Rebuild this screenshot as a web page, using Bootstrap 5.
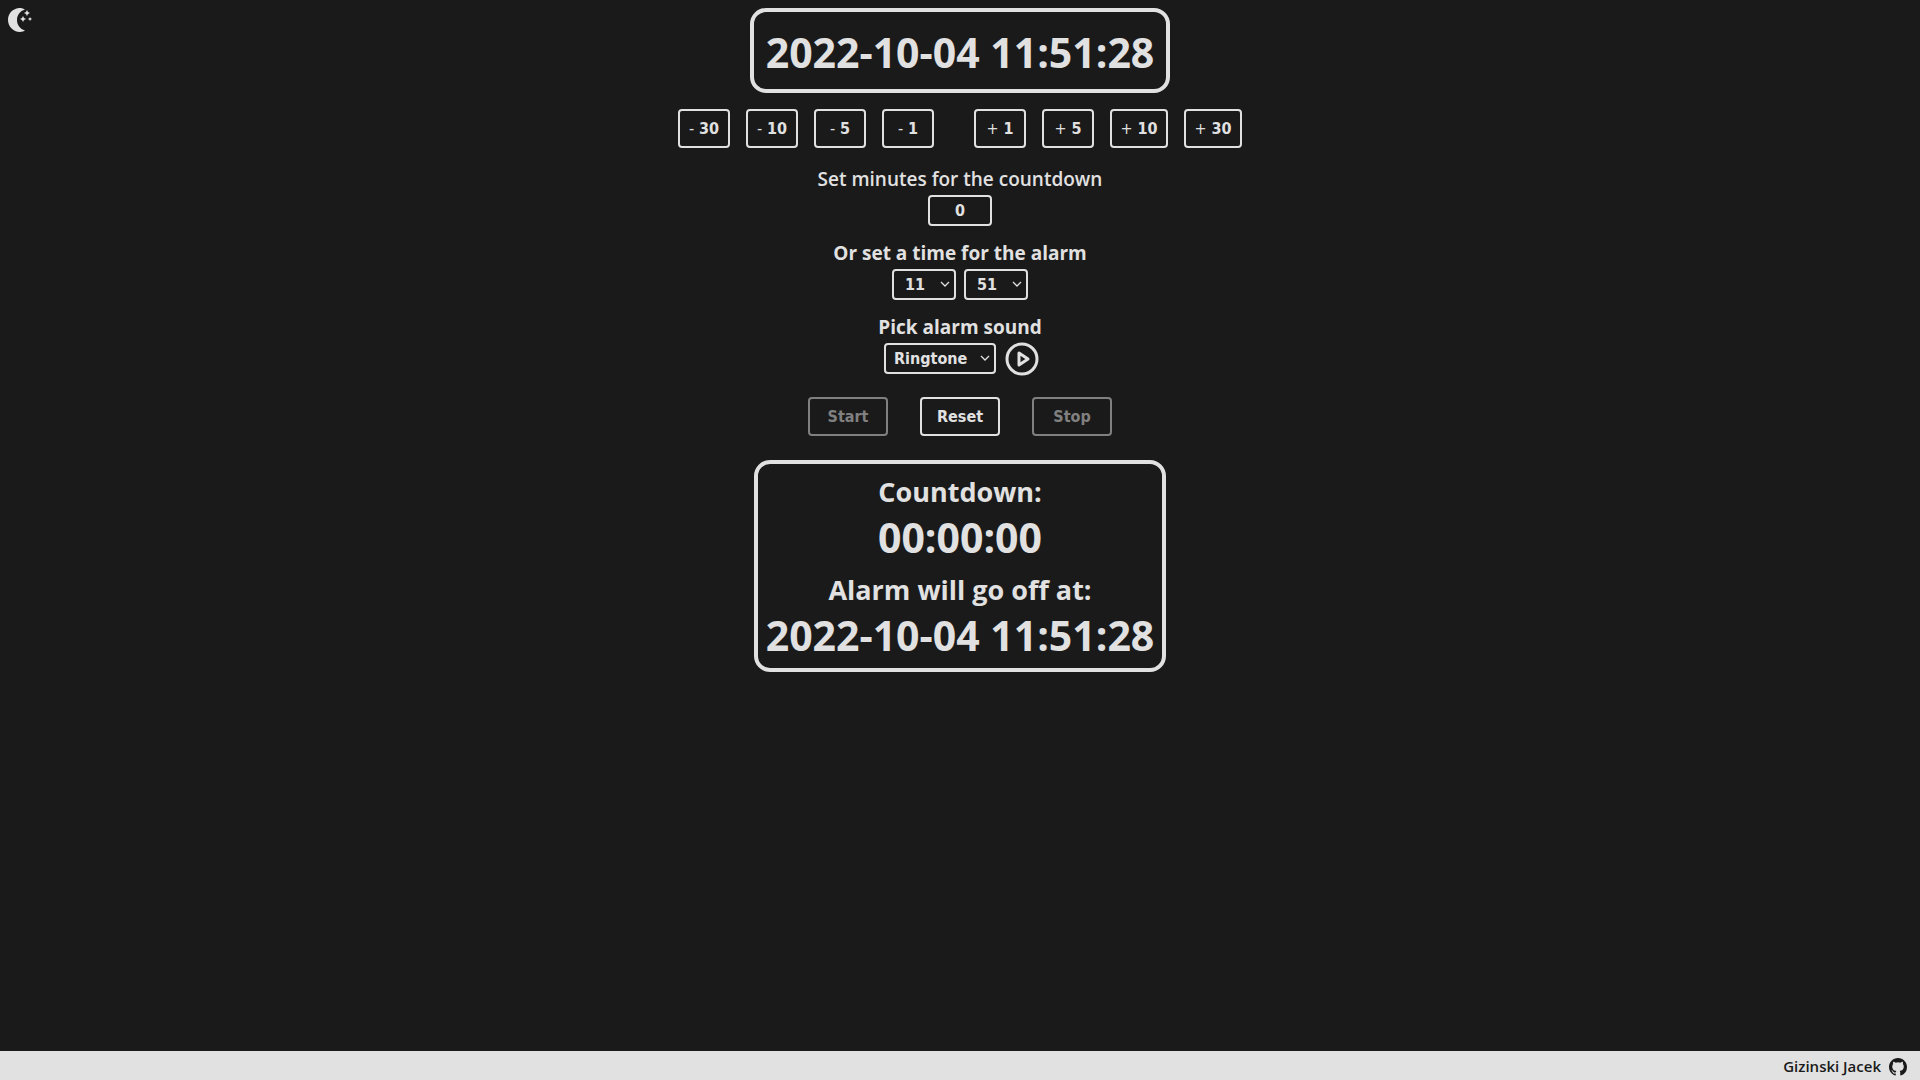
<!DOCTYPE html>
<html lang="en">
<head>
<meta charset="utf-8">
<meta name="viewport" content="width=device-width, initial-scale=1">
<title>Alarm clock</title>
<link rel="stylesheet" href="https://cdn.jsdelivr.net/npm/bootstrap@5.3.0/dist/css/bootstrap.min.css">
<style>
:root { --ink: #e1e1e1; --paper: #1a1a1a; }
body { background: var(--paper); color: var(--ink); font-family: "Segoe UI", "Open Sans", "Noto Sans", sans-serif; font-weight: 600; }
.panel { border: 4px solid var(--ink); border-radius: 16px; text-align: center; font-weight: 700; }
.clock-panel { padding: 22px 12px 19px; }
.alarm-panel { padding: 8px; margin-top: 24px; }
.clock-text { font-size: 41px; line-height: 36px; font-weight: 700; }
.alarm-panel .clock-text { line-height: 50px; }
.panel-title { font-size: 27px; line-height: 40px; font-weight: 700; margin: 0; }
.control { background: transparent; color: var(--ink); border: 2px solid var(--ink); border-radius: 4px; font-family: Tahoma, "DejaVu Sans Condensed", "DejaVu Sans", sans-serif; font-stretch: condensed; font-size: 16px; font-weight: 700; }
.step { height: 39px; min-width: 52px; padding: 0 7px; }
.step-wide { min-width: 58px; }
.step-sign { font-weight: 400; }
.action { height: 39px; width: 80px; padding: 0; }
.action:disabled { color: #808080; border-color: #808080; }
.actions { gap: 32px; margin-top: 20px; }
.field { height: 31px; padding: 0 8px; }
.digits { width: 64px; }
.sound { width: 112px; }
select.control { appearance: none; background: url("data:image/svg+xml,%3Csvg xmlns='http://www.w3.org/2000/svg' width='10' height='7'%3E%3Cpath d='M1 1 5 5 9 1' fill='none' stroke='%23e1e1e1' stroke-width='1.300'/%3E%3C/svg%3E") no-repeat right 4px center; }
select.digits { padding-left: 11px; }
.caption { font-size: 19px; line-height: 31px; }
.strong-caption { font-weight: 700; }
.setting { margin-top: 12px; }
.credit { background: var(--ink); height: 29px; font-size: 15px; padding: 2px 13px 0 0; }
.credit a { color: var(--paper); }
.theme { left: 8px; top: 8px; }
</style>
<script src="https://cdn.jsdelivr.net/npm/bootstrap@5.3.0/dist/js/bootstrap.bundle.min.js"></script>
</head>
<body class="d-flex flex-column min-vh-100">
<button type="button" class="theme btn p-0 border-0 position-absolute d-flex" aria-label="Change theme">
<svg width="25" height="25" viewBox="0 0 25 25" fill="#e1e1e1"><path d="M17 1.500C14 0 12 0 11 .1 4 1 0 6 0 12s5 12 12 12c2 0 4-.8 5-1.500C12 21 9 17 9 12s3-9 8-10.500Z"/><path d="m19 2 1 2 2 1-2 1-1 2-1-2-2-1 2-1ZM15 8l1 2 2 1-2 1-1 2-1-2-2-1 2-1ZM22 9l.7 1.300L24 11l-1.300.7L22 13l-.7-1.300L20 11l1.300-.7Z"/></svg>
</button>
<main class="flex-grow-1 d-flex flex-column align-items-center pt-2">
<div class="panel clock-panel"><time class="clock-text d-block">2022-10-04 11:51:28</time></div>
<div class="d-flex mt-3 justify-content-center">
<div class="d-flex gap-3 me-4 pe-3">
<button type="button" class="control step"><span class="step-sign">-</span> 30</button>
<button type="button" class="control step"><span class="step-sign">-</span> 10</button>
<button type="button" class="control step"><span class="step-sign">-</span> 5</button>
<button type="button" class="control step"><span class="step-sign">-</span> 1</button>
</div>
<div class="d-flex gap-3">
<button type="button" class="control step"><span class="step-sign">+</span> 1</button>
<button type="button" class="control step"><span class="step-sign">+</span> 5</button>
<button type="button" class="control step step-wide"><span class="step-sign">+</span> 10</button>
<button type="button" class="control step step-wide"><span class="step-sign">+</span> 30</button>
</div>
</div>
<div class="d-flex flex-column align-items-center mt-3">
<label class="caption" for="minutes">Set minutes for the countdown</label>
<input class="control field digits text-center" id="minutes" type="text" inputmode="numeric" value="0">
</div>
<div class="setting d-flex flex-column align-items-center">
<label class="caption strong-caption" for="hour">Or set a time for the alarm</label>
<div class="d-flex gap-2">
<select class="control field digits" id="hour" aria-label="Hour"><option>11</option></select>
<select class="control field digits" id="minute" aria-label="Minute"><option>51</option></select>
</div>
</div>
<div class="setting d-flex flex-column align-items-center">
<label class="caption strong-caption" for="sound">Pick alarm sound</label>
<div class="d-flex">
<select class="control field sound" id="sound"><option>Ringtone</option></select>
<button type="button" class="btn p-0 border-0 d-flex ms-2" aria-label="Play sound"><svg width="32" height="34" viewBox="0 0 32 34" overflow="visible" fill="none" stroke="#e1e1e1" stroke-width="3" stroke-linejoin="round"><circle cx="18" cy="16" r="15"/><path d="M15 10v12l9-6Z"/></svg></button>
</div>
</div>
<div class="actions d-flex">
<button type="button" class="control action" disabled>Start</button>
<button type="button" class="control action">Reset</button>
<button type="button" class="control action" disabled>Stop</button>
</div>
<section class="panel alarm-panel">
<h2 class="panel-title">Countdown:</h2>
<div class="clock-text">00:00:00</div>
<h2 class="panel-title mt-2">Alarm will go off at:</h2>
<time class="clock-text d-block">2022-10-04 11:51:28</time>
</section>
</main>
<footer class="credit d-flex align-items-center justify-content-end">
<a class="text-decoration-none d-flex align-items-center gap-2" href="#">Gizinski Jacek
<svg width="18" height="18" viewBox="0 0 16 16" fill="#1a1a1a"><path d="M8 0C3.580 0 0 3.580 0 8c0 3.540 2.290 6.530 5.470 7.590.4.070.55-.17.55-.38 0-.19-.01-.82-.01-1.490-2.010.37-2.530-.49-2.690-.94-.09-.23-.48-.94-.82-1.130-.28-.15-.68-.52-.01-.53.63-.01 1.080.58 1.230.82.72 1.210 1.870.87 2.330.66.07-.52.28-.87.51-1.070-1.780-.2-3.640-.89-3.640-3.950 0-.87.31-1.590.82-2.150-.08-.2-.36-1.020.08-2.120 0 0 .67-.21 2.200.82a7.600 7.600 0 0 1 4 0c1.530-1.040 2.200-.82 2.200-.82.44 1.100.16 1.920.08 2.120.51.56.82 1.270.82 2.150 0 3.070-1.870 3.750-3.650 3.950.29.25.54.73.54 1.480 0 1.070-.01 1.930-.01 2.200 0 .21.15.46.55.38A8 8 0 0 0 16 8c0-4.420-3.580-8-8-8Z"/></svg></a>
</footer>
</body>
</html>
